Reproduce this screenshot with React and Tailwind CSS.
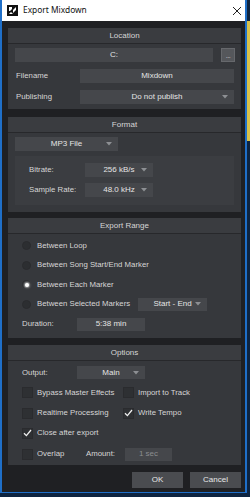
import React from "react";

const font = { fontFamily: '"Liberation Sans", Arial, sans-serif' };

function Arrow() {
  return (
    <svg width="6" height="4" viewBox="0 0 6 4" className="shrink-0">
      <path d="M0 0 L6 0 L3 3.5 Z" fill="#8d8f93" />
    </svg>
  );
}

function Field({ children, className = "", arrow = false, dim = false }) {
  return (
    <div
      className={`relative flex items-center justify-center bg-[#45474b] text-[8px] leading-none ${
        dim ? "text-[#8b8d90]" : "text-[#e4e4e4]"
      } ${className}`}
    >
      <span>{children}</span>
      {arrow && (
        <span className="absolute right-[6px] top-1/2 -translate-y-1/2 flex">
          <Arrow />
        </span>
      )}
    </div>
  );
}

function Panel({ title, children, className = "" }) {
  return (
    <div className={`bg-[#36383c] ${className}`}>
      <div className="h-[16px] flex items-center justify-center bg-[#3a3c40] border-b border-[#27282b] text-[8px] text-[#d6d6d6]">
        {title}
      </div>
      {children}
    </div>
  );
}

function Radio({ checked, label, children }) {
  return (
    <div className="h-[19.5px] flex items-center pl-[14px]">
      <div className="w-[9px] h-[9px] rounded-full bg-[#2c2e31] border border-[#2a2b2e] flex items-center justify-center">
        {checked && <div className="w-[4px] h-[4px] rounded-full bg-white shadow-[0_0_2px_1px_rgba(255,255,255,0.6)]" />}
      </div>
      <span className="ml-[6px] text-[7.8px] text-[#d6d6d6] w-[96px] whitespace-nowrap">{label}</span>
      {children}
    </div>
  );
}

function Check({ checked, label, w = "" }) {
  return (
    <div className={`flex items-center ${w}`}>
      <div className="w-[11px] h-[11px] bg-[#2e3033] border border-[#2a2b2e] flex items-center justify-center">
        {checked && (
          <svg width="9" height="8" viewBox="0 0 9 8">
            <path d="M1 4.2 L3.4 6.6 L8 1" stroke="#f0f0f0" strokeWidth="1.3" fill="none" />
          </svg>
        )}
      </div>
      <span className="ml-[4px] text-[7.8px] text-[#d6d6d6] whitespace-nowrap">{label}</span>
    </div>
  );
}

export default function App() {
  return (
    <div className="w-[250px] h-[497px] bg-[#0e2440] overflow-hidden relative" style={font}>
      <div className="absolute right-0 top-[21px] w-[3px] h-[120px] bg-[#d8c24a]" />
      <div className="w-[247px] h-[493px] border-l-2 border-r-2 border-b border-[#1f6fc8] flex flex-col">
        <div className="h-[21px] bg-white flex items-center shrink-0">
          <svg width="11" height="11" viewBox="0 0 11 11" className="ml-[5px]">
            <rect x="0" y="0" width="11" height="11" fill="#111" />
            <path d="M2 2 L5 2 L5 4 L3 6 L2 6 Z" fill="#fff" />
            <path d="M6 5 L9 2 L9 5 L6 8 Z" fill="#fff" />
            <path d="M2 9 L4 7 L6 9 Z" fill="#fff" />
          </svg>
          <span className="ml-[5px] text-[8.4px] text-[#111]" style={{ fontFamily: '"Noto Sans", "Liberation Sans", sans-serif' }}>
            Export Mixdown
          </span>
          <svg width="10" height="10" viewBox="0 0 10 10" className="ml-auto mr-[3px]">
            <path d="M1 1 L9 9 M9 1 L1 9" stroke="#222" strokeWidth="1" />
          </svg>
        </div>

        <div className="flex-1 bg-[#1f2023] pl-[6px] pr-[4px] pt-[7px] flex flex-col">
          {/* Location */}
          <Panel title="Location" className="h-[81px]">
            <div className="flex items-center pl-[7px] pr-[6px] mt-[4px]">
              <Field className="w-[198px] h-[14px]">C:</Field>
              <div className="ml-[8px] w-[14px] h-[14px] bg-[#55575b] border border-[#66686c] flex items-end justify-center pb-[2px]">
                <span className="text-[7px] leading-none text-[#c8c8c8] tracking-[-0.5px]">...</span>
              </div>
            </div>
            <div className="flex items-center mt-[7px] pl-[8px]">
              <span className="w-[64px] text-[7.8px] text-[#d6d6d6]">Filename</span>
              <Field className="w-[154px] h-[14px]">Mixdown</Field>
            </div>
            <div className="flex items-center mt-[7px] pl-[8px]">
              <span className="w-[64px] text-[7.8px] text-[#d6d6d6]">Publishing</span>
              <Field className="w-[154px] h-[14px]" arrow>Do not publish</Field>
            </div>
          </Panel>

          {/* Format */}
          <Panel title="Format" className="h-[95px] mt-[8px]">
            <div className="pl-[7px] mt-[4px]">
              <Field className="w-[103px] h-[14px]" arrow>MP3 File</Field>
            </div>
            <div className="ml-[7px] mr-[7px] mt-[5px] h-[49px] bg-[#3b3d41] pt-[7px]">
              <div className="flex items-center pl-[14px]">
                <span className="w-[56px] text-[7.8px] text-[#d6d6d6]">Bitrate:</span>
                <Field className="w-[68px] h-[14px]" arrow>256 kB/s</Field>
              </div>
              <div className="flex items-center pl-[14px] mt-[6px]">
                <span className="w-[56px] text-[7.8px] text-[#d6d6d6]">Sample Rate:</span>
                <Field className="w-[68px] h-[14px]" arrow>48.0 kHz</Field>
              </div>
            </div>
          </Panel>

          {/* Export Range */}
          <Panel title="Export Range" className="h-[120px] mt-[6px]">
            <div className="pt-[2px]">
              <Radio label="Between Loop" />
              <Radio label="Between Song Start/End Marker" />
              <Radio checked label="Between Each Marker" />
              <Radio label="Between Selected Markers">
                <Field className="w-[69px] h-[13px] ml-[5px]" arrow>Start - End</Field>
              </Radio>
              <div className="flex items-center pl-[14px] h-[20px]">
                <span className="w-[55px] text-[7.8px] text-[#d6d6d6]">Duration:</span>
                <Field className="w-[68px] h-[13px] bg-[#2f3134]">5:38 min</Field>
              </div>
            </div>
          </Panel>

          {/* Options */}
          <Panel title="Options" className="h-[120px] mt-[7px]">
            <div className="flex items-center pl-[14px] mt-[5px]">
              <span className="w-[55px] text-[7.8px] text-[#d6d6d6]">Output:</span>
              <Field className="w-[68px] h-[13px]" arrow>Main</Field>
            </div>
            <div className="pl-[14px] mt-[8px] flex flex-col gap-[8.5px]">
              <div className="flex">
                <Check label="Bypass Master Effects" w="w-[101px]" />
                <Check label="Import to Track" />
              </div>
              <div className="flex">
                <Check label="Realtime Processing" w="w-[101px]" />
                <Check checked label="Write Tempo" />
              </div>
              <div className="flex">
                <Check checked label="Close after export" />
              </div>
              <div className="flex items-center">
                <Check label="Overlap" w="w-[64px]" />
                <span className="text-[7.8px] text-[#d6d6d6] w-[39px]">Amount:</span>
                <Field className="w-[47px] h-[13px]" dim>1 sec</Field>
              </div>
            </div>
          </Panel>

          <div className="flex justify-end gap-[7px] mt-[7px] pr-[0px]">
            <div className="w-[51px] h-[16px] bg-[#4a4c50] flex items-center justify-center text-[8px] text-[#e8e8e8]">OK</div>
            <div className="w-[51px] h-[16px] bg-[#4a4c50] flex items-center justify-center text-[8px] text-[#e8e8e8]">Cancel</div>
          </div>
        </div>
      </div>
    </div>
  );
}
